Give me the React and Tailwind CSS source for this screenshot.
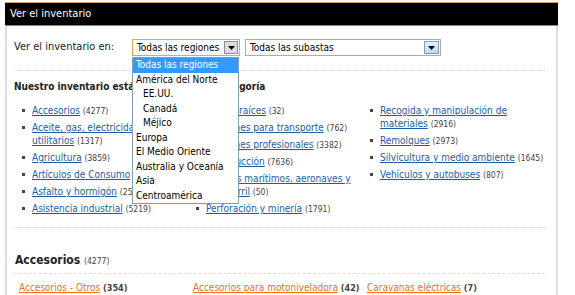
import React from 'react';

const col1 = [
  { name: 'Accesorios', count: 4277 },
  { name: 'Aceite, gas, electricidad y', name2: 'utilitarios', count: 1317 },
  { name: 'Agricultura', count: 3859 },
  { name: 'Artículos de Consumo', count: 1283 },
  { name: 'Asfalto y hormigón', count: 2576 },
  { name: 'Asistencia industrial', count: 5219 },
];

const col2 = [
  { name: 'Bienes raíces', count: 32 },
  { name: 'Camiones para transporte', count: 762 },
  { name: 'Camiones profesionales', count: 3382 },
  { name: 'Construcción', count: 7636 },
  { name: 'Equipos marítimos, aeronaves y', name2: 'ferrocarril', count: 50 },
  { name: 'Perforación y minería', count: 1791 },
];

const col3 = [
  { name: 'Recogida y manipulación de', name2: 'materiales', count: 2916 },
  { name: 'Remolques', count: 2973 },
  { name: 'Silvicultura y medio ambiente', count: 1645 },
  { name: 'Vehículos y autobuses', count: 807 },
];

const regions = [
  { label: 'Todas las regiones', active: true },
  { label: 'América del Norte' },
  { label: 'EE.UU.', sub: true },
  { label: 'Canadá', sub: true },
  { label: 'Méjico', sub: true },
  { label: 'Europa' },
  { label: 'El Medio Oriente' },
  { label: 'Australia y Oceanía' },
  { label: 'Asia' },
  { label: 'Centroamérica' },
];

const subcats = [
  { name: 'Accesorios - Otros', count: 354 },
  { name: 'Accesorios para motoniveladora', count: 42 },
  { name: 'Caravanas eléctricas', count: 7 },
];

const Arrow = () => (
  <svg width="7" height="4" viewBox="0 0 7 4">
    <path d="M0 0h7L3.5 4z" fill="#000" />
  </svg>
);

const Count = ({ n }) => <span className="text-[8.5px] leading-none text-[#444]">({n})</span>;

const CategoryList = ({ items }) => (
  <ul className="flex flex-col gap-[4px]">
    {items.map((item) => (
      <li key={item.name} className="flex text-[10px] leading-[13px] pl-[8px] whitespace-nowrap">
        <span className="mt-[5px] w-[3px] h-[3px] bg-[#444] shrink-0" />
        <span className="ml-[7px]">
          {item.name2 ? (
            <>
              <a className="text-[#1d5ca6] underline">{item.name}</a>
              <br />
              <a className="text-[#1d5ca6] underline">{item.name2}</a> <Count n={item.count} />
            </>
          ) : (
            <>
              <a className="text-[#1d5ca6] underline">{item.name}</a> <Count n={item.count} />
            </>
          )}
        </span>
      </li>
    ))}
  </ul>
);

const App = () => {
  return (
    <div className="relative w-[575px] h-[295px] overflow-hidden bg-white pt-[2px] font-['DejaVu_Sans_Condensed','DejaVu_Sans',sans-serif] font-stretch-condensed text-[#222]">
      <div className="ml-[5px] w-[553px] border-t border-[#d9a066]">
        <div className="h-[23px] bg-black border-b border-[#8a8a8a] flex items-center pl-[5px] text-white text-[11px]">
          Ver el inventario
        </div>

        <div className="border-x-2 border-[#dedede] pl-[7px] pr-[11px] pt-[13px] h-[300px]">
          <div className="flex items-center h-[17px] text-[11px] whitespace-nowrap">
            <span className="w-[118px]">Ver el inventario en:</span>
            <div className="w-[108px] h-[17px] border border-[#e9a53f] flex items-center justify-between pl-[4px] pr-px text-[10px] text-black">
              <span>Todas las regiones</span>
              <span className="w-[14px] h-[13px] bg-[#dcdcdc] border border-[#8d8d8d] flex items-center justify-center">
                <Arrow />
              </span>
            </div>
            <div className="ml-[5px] w-[196px] h-[17px] border border-[#a5acb2] flex items-center justify-between pl-[4px] pr-px text-[10px] text-black">
              <span>Todas las subastas</span>
              <span className="w-[15px] h-[13px] bg-gradient-to-b from-[#e6f1fd] to-[#bcd8f6] border border-[#7f9db9] flex items-center justify-center">
                <Arrow />
              </span>
            </div>
          </div>

          <div className="mt-[14px] border-t border-dotted border-[#d0d0d0]" />

          <p className="mt-[9px] leading-[13px] text-[10px] font-bold text-[#222] whitespace-nowrap">
            Nuestro inventario está organizado por categoría
          </p>

          <div className="mt-[11px] grid grid-cols-[174px_174px_1fr]">
            <CategoryList items={col1} />
            <CategoryList items={col2} />
            <CategoryList items={col3} />
          </div>

          <div className="mt-[12px] border-t border-dotted border-[#d0d0d0]" />

          <h3 className="mt-[24px] leading-[16px] text-[12px] font-bold text-[#222] pl-px">
            Accesorios <span className="text-[8.5px] leading-none font-normal text-[#444]">(4277)</span>
          </h3>

          <div className="mt-[5px] border-t border-dashed border-[#f3d6d6]" />

          <div className="mt-[7px] grid grid-cols-[174px_174px_1fr] pl-[5px] text-[10px] leading-[14px] whitespace-nowrap">
            {subcats.map((s) => (
              <div key={s.name}>
                <a className="text-[#e9731c] underline">{s.name}</a>{' '}
                <span className="font-bold text-[9px] text-[#444]">({s.count})</span>
              </div>
            ))}
          </div>
        </div>
      </div>

      <ul className="absolute left-[132px] top-[57px] w-[107px] bg-white border border-[#7f9db9] text-[10px] text-black whitespace-nowrap">
        {regions.map((r) => (
          <li
            key={r.label}
            className={`h-[14.5px] leading-[14.5px] ${r.sub ? 'pl-[10px]' : 'pl-[3px]'} ${
              r.active ? 'bg-[#3399ff] text-white' : ''
            }`}
          >
            {r.label}
          </li>
        ))}
      </ul>
    </div>
  );
};

export default App;
